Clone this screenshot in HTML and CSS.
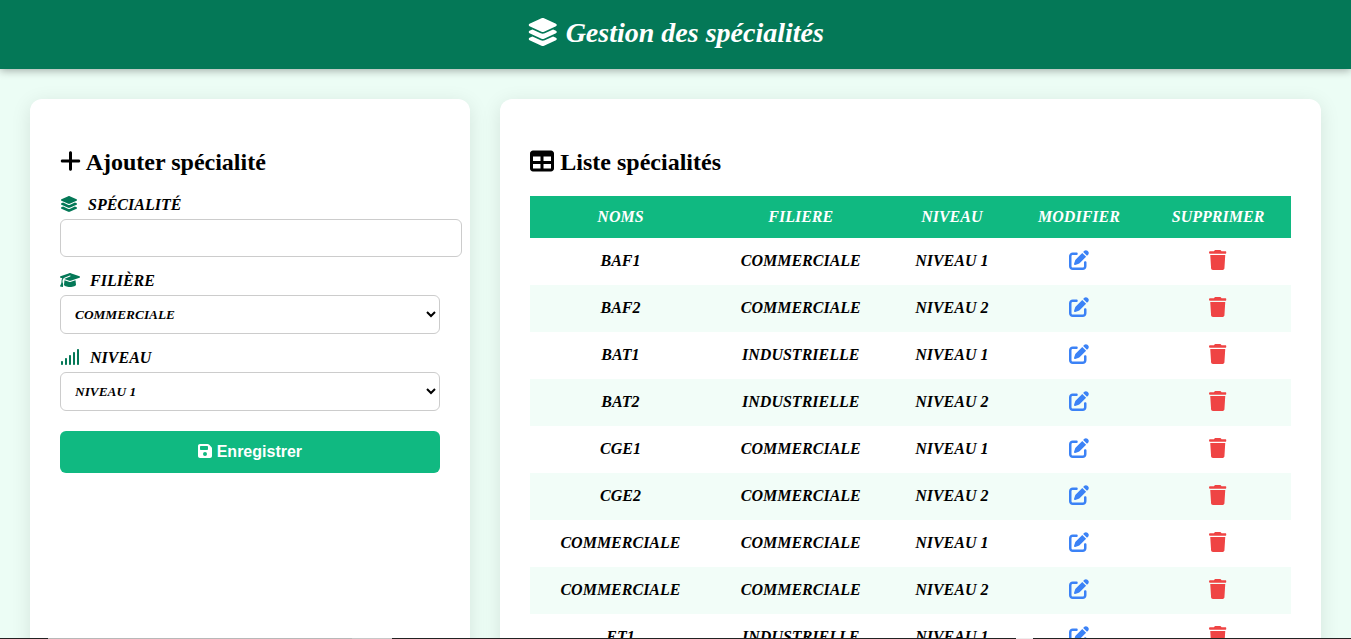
FILE: index.html
```html
<!DOCTYPE html>
<html lang="fr">
<head>
    <meta charset="UTF-8" />
    <meta name="viewport" content="width=device-width, initial-scale=1.0">
    <title>Gestion des spécialités</title>
    <link rel="stylesheet" href="styles.css">
</head>
<body>
<svg class="sprite" aria-hidden="true">
    <symbol id="layers" viewBox="0 0 576 512"><path d="M264.5 5.2c14.9-6.9 32.1-6.9 47 0l218.6 101c8.5 3.9 13.9 12.4 13.9 21.8s-5.4 17.9-13.9 21.8l-218.6 101c-14.9 6.9-32.1 6.9-47 0L45.9 149.8C37.4 145.8 32 137.3 32 128s5.4-17.9 13.9-21.8L264.5 5.2zM476.9 209.6l53.2 24.6c8.5 3.9 13.9 12.4 13.9 21.8s-5.4 17.9-13.9 21.8l-218.6 101c-14.9 6.9-32.1 6.9-47 0L45.9 277.8C37.4 273.8 32 265.3 32 256s5.4-17.9 13.9-21.8l53.2-24.6 152 70.2c23.4 10.8 50.4 10.8 73.8 0l152-70.2zm-152 198.2l152-70.2 53.2 24.6c8.5 3.9 13.9 12.4 13.9 21.8s-5.4 17.9-13.9 21.8l-218.6 101c-14.9 6.9-32.1 6.9-47 0L45.9 405.8C37.4 401.8 32 393.3 32 384s5.4-17.9 13.9-21.8l53.2-24.6 152 70.2c23.4 10.8 50.4 10.8 73.8 0z"/></symbol>
    <symbol id="plus" viewBox="0 0 448 512"><path d="M256 80c0-17.7-14.3-32-32-32s-32 14.3-32 32V224H48c-17.7 0-32 14.3-32 32s14.3 32 32 32H192V432c0 17.7 14.3 32 32 32s32-14.3 32-32V288H400c17.7 0 32-14.3 32-32s-14.3-32-32-32H256V80z"/></symbol>
    <symbol id="table" viewBox="0 0 512 512"><path d="M64 256V160H224v96H64zm0 64H224v96H64V320zm224 96V320H448v96H288zM448 256H288V160H448v96zM64 32C28.7 32 0 60.7 0 96V416c0 35.3 28.7 64 64 64H448c35.3 0 64-28.7 64-64V96c0-35.3-28.7-64-64-64H64z"/></symbol>
    <symbol id="cap" viewBox="0 0 640 512"><path d="M320 32c-8.1 0-16.1 1.4-23.7 4.1L15.8 137.4C6.3 140.9 0 149.9 0 160s6.3 19.1 15.8 22.6l57.9 20.9C57.3 229.3 48 259.8 48 291.9v28.1c0 28.4-10.8 57.7-22.3 80.8c-6.5 13-13.9 25.8-22.5 37.6C0 442.7-.9 448.3 .9 453.4s6 8.9 11.2 10.2l64 16c4.2 1.1 8.7 .3 12.4-2s6.3-6.1 7.1-10.4c8.6-42.8 4.3-81.2-2.1-108.7C90.3 344.3 86 329.8 80 316.5V291.9c0-30.2 10.2-58.7 27.9-81.5c12.9-15.5 29.6-28 49.2-35.7l157-61.7c8.2-3.2 17.5 .8 20.7 9s-.8 17.5-9 20.7l-157 61.7c-12.4 4.9-23.3 12.4-32.2 21.6l159.6 57.6c7.6 2.7 15.6 4.1 23.7 4.1s16.1-1.4 23.7-4.1L624.2 182.6c9.5-3.4 15.8-12.5 15.8-22.6s-6.3-19.1-15.8-22.6L343.7 36.1C336.1 33.4 328.1 32 320 32zM128 408c0 35.3 86 72 192 72s192-36.7 192-72L496.7 262.6 354.5 314c-11.1 4-22.8 6-34.5 6s-23.5-2-34.5-6L143.3 262.6 128 408z"/></symbol>
    <symbol id="signal" viewBox="0 0 640 512"><path d="M576 0c17.7 0 32 14.3 32 32V480c0 17.7-14.3 32-32 32s-32-14.3-32-32V32c0-17.7 14.3-32 32-32zM448 96c17.7 0 32 14.3 32 32V480c0 17.7-14.3 32-32 32s-32-14.3-32-32V128c0-17.7 14.3-32 32-32zM352 224V480c0 17.7-14.3 32-32 32s-32-14.3-32-32V224c0-17.7 14.3-32 32-32s32 14.3 32 32zM192 288c17.7 0 32 14.3 32 32V480c0 17.7-14.3 32-32 32s-32-14.3-32-32V320c0-17.7 14.3-32 32-32zM96 416v64c0 17.7-14.3 32-32 32s-32-14.3-32-32V416c0-17.7 14.3-32 32-32s32 14.3 32 32z"/></symbol>
    <symbol id="save" viewBox="0 0 448 512"><path d="M64 32C28.7 32 0 60.7 0 96V416c0 35.3 28.7 64 64 64H384c35.3 0 64-28.7 64-64V173.3c0-17-6.7-33.3-18.7-45.3L352 50.7C340 38.7 323.7 32 306.7 32H64zm0 96c0-17.7 14.3-32 32-32H288c17.7 0 32 14.3 32 32v64c0 17.7-14.3 32-32 32H96c-17.7 0-32-14.3-32-32V128zM224 288a64 64 0 1 1 0 128 64 64 0 1 1 0-128z"/></symbol>
    <symbol id="edit" viewBox="0 0 512 512"><path d="M471.6 21.7c-21.9-21.9-57.3-21.9-79.2 0L362.3 51.7l97.9 97.9 30.1-30.1c21.9-21.9 21.9-57.3 0-79.2L471.6 21.7zm-299.2 220c-6.1 6.1-10.8 13.6-13.5 21.9l-29.6 88.8c-2.9 8.6-.6 18.1 5.8 24.6s15.9 8.7 24.6 5.8l88.8-29.6c8.2-2.7 15.7-7.4 21.9-13.5L437.7 172.3 339.7 74.3 172.4 241.7zM96 64C43 64 0 107 0 160V416c0 53 43 96 96 96H352c53 0 96-43 96-96V320c0-17.7-14.3-32-32-32s-32 14.3-32 32v96c0 17.7-14.3 32-32 32H96c-17.7 0-32-14.3-32-32V160c0-17.7 14.3-32 32-32h96c17.7 0 32-14.3 32-32s-14.3-32-32-32H96z"/></symbol>
    <symbol id="trash" viewBox="0 0 448 512"><path d="M135.2 17.7L128 32H32C14.3 32 0 46.3 0 64S14.3 96 32 96H416c17.7 0 32-14.3 32-32s-14.3-32-32-32H320l-7.2-14.3C307.4 6.8 296.3 0 284.2 0H163.8c-12.1 0-23.2 6.8-28.6 17.7zM416 128H32L53.2 467c1.6 25.3 22.6 45 47.9 45H346.9c25.3 0 46.3-19.7 47.9-45L416 128z"/></symbol>
</svg>

<header>
    <svg class="icon" viewBox="0 0 576 512"><use href="#layers"/></svg>
    Gestion des spécialités
</header>

<div class="container">
    <!-- Formulaire -->
    <div class="card form-card">
        <h2><svg class="icon" viewBox="0 0 448 512"><use href="#plus"/></svg> Ajouter spécialité</h2>
        <form action="#" method="post">
            <div class="field">
                <label for="specialite"><svg class="icon" viewBox="0 0 576 512"><use href="#layers"/></svg> SPÉCIALITÉ</label>
                <input type="text" id="specialite" name="specialite">
            </div>
            <div class="field">
                <label for="filiere"><svg class="icon" viewBox="0 0 640 512"><use href="#cap"/></svg> FILIÈRE</label>
                <select id="filiere" name="filiere">
                    <option>COMMERCIALE</option>
                    <option>INDUSTRIELLE</option>
                </select>
            </div>
            <div class="field">
                <label for="niveau"><svg class="icon" viewBox="0 0 640 512"><use href="#signal"/></svg> NIVEAU</label>
                <select id="niveau" name="niveau">
                    <option>NIVEAU 1</option>
                    <option>NIVEAU 2</option>
                </select>
            </div>
            <button type="submit"><svg class="icon" viewBox="0 0 448 512"><use href="#save"/></svg> Enregistrer</button>
        </form>
    </div>

    <!-- Liste -->
    <div class="card list-card">
        <h2><svg class="icon" viewBox="0 0 512 512"><use href="#table"/></svg> Liste spécialités</h2>
        <table>
            <thead>
                <tr>
                    <th>NOMS</th>
                    <th>FILIERE</th>
                    <th>NIVEAU</th>
                    <th>MODIFIER</th>
                    <th>SUPPRIMER</th>
                </tr>
            </thead>
            <tbody>
                <tr>
                    <td>BAF1</td>
                    <td>COMMERCIALE</td>
                    <td>NIVEAU 1</td>
                    <td><a class="edit" href="#" aria-label="Modifier"><svg class="icon" viewBox="0 0 512 512"><use href="#edit"/></svg></a></td>
                    <td><a class="delete" href="#" aria-label="Supprimer"><svg class="icon" viewBox="0 0 448 512"><use href="#trash"/></svg></a></td>
                </tr>
                <tr>
                    <td>BAF2</td>
                    <td>COMMERCIALE</td>
                    <td>NIVEAU 2</td>
                    <td><a class="edit" href="#" aria-label="Modifier"><svg class="icon" viewBox="0 0 512 512"><use href="#edit"/></svg></a></td>
                    <td><a class="delete" href="#" aria-label="Supprimer"><svg class="icon" viewBox="0 0 448 512"><use href="#trash"/></svg></a></td>
                </tr>
                <tr>
                    <td>BAT1</td>
                    <td>INDUSTRIELLE</td>
                    <td>NIVEAU 1</td>
                    <td><a class="edit" href="#" aria-label="Modifier"><svg class="icon" viewBox="0 0 512 512"><use href="#edit"/></svg></a></td>
                    <td><a class="delete" href="#" aria-label="Supprimer"><svg class="icon" viewBox="0 0 448 512"><use href="#trash"/></svg></a></td>
                </tr>
                <tr>
                    <td>BAT2</td>
                    <td>INDUSTRIELLE</td>
                    <td>NIVEAU 2</td>
                    <td><a class="edit" href="#" aria-label="Modifier"><svg class="icon" viewBox="0 0 512 512"><use href="#edit"/></svg></a></td>
                    <td><a class="delete" href="#" aria-label="Supprimer"><svg class="icon" viewBox="0 0 448 512"><use href="#trash"/></svg></a></td>
                </tr>
                <tr>
                    <td>CGE1</td>
                    <td>COMMERCIALE</td>
                    <td>NIVEAU 1</td>
                    <td><a class="edit" href="#" aria-label="Modifier"><svg class="icon" viewBox="0 0 512 512"><use href="#edit"/></svg></a></td>
                    <td><a class="delete" href="#" aria-label="Supprimer"><svg class="icon" viewBox="0 0 448 512"><use href="#trash"/></svg></a></td>
                </tr>
                <tr>
                    <td>CGE2</td>
                    <td>COMMERCIALE</td>
                    <td>NIVEAU 2</td>
                    <td><a class="edit" href="#" aria-label="Modifier"><svg class="icon" viewBox="0 0 512 512"><use href="#edit"/></svg></a></td>
                    <td><a class="delete" href="#" aria-label="Supprimer"><svg class="icon" viewBox="0 0 448 512"><use href="#trash"/></svg></a></td>
                </tr>
                <tr>
                    <td>COMMERCIALE</td>
                    <td>COMMERCIALE</td>
                    <td>NIVEAU 1</td>
                    <td><a class="edit" href="#" aria-label="Modifier"><svg class="icon" viewBox="0 0 512 512"><use href="#edit"/></svg></a></td>
                    <td><a class="delete" href="#" aria-label="Supprimer"><svg class="icon" viewBox="0 0 448 512"><use href="#trash"/></svg></a></td>
                </tr>
                <tr>
                    <td>COMMERCIALE</td>
                    <td>COMMERCIALE</td>
                    <td>NIVEAU 2</td>
                    <td><a class="edit" href="#" aria-label="Modifier"><svg class="icon" viewBox="0 0 512 512"><use href="#edit"/></svg></a></td>
                    <td><a class="delete" href="#" aria-label="Supprimer"><svg class="icon" viewBox="0 0 448 512"><use href="#trash"/></svg></a></td>
                </tr>
                <tr>
                    <td>ET1</td>
                    <td>INDUSTRIELLE</td>
                    <td>NIVEAU 1</td>
                    <td><a class="edit" href="#" aria-label="Modifier"><svg class="icon" viewBox="0 0 512 512"><use href="#edit"/></svg></a></td>
                    <td><a class="delete" href="#" aria-label="Supprimer"><svg class="icon" viewBox="0 0 448 512"><use href="#trash"/></svg></a></td>
                </tr>
            </tbody>
        </table>
    </div>
</div>
<div class="bottom-edge"></div>
</body>
</html>
```
FILE: styles.css
```css
body {
    margin: 0;
    background: #ecfdf5;
    color: #000;
    font-family: "Liberation Serif", "Times New Roman", serif;
}

.sprite {
    display: none;
}
.icon {
    height: 1em;
    fill: currentColor;
    vertical-align: -0.125em;
    overflow: visible;
}

header {
    padding: 16px 20px 20px;
    background: #047857;
    color: #fff;
    font-size: 28px;
    line-height: 33px;
    font-weight: bold;
    font-style: italic;
    text-align: center;
    box-shadow: 0 2px 8px rgba(0,0,0,0.3);
}

.container {
    display: flex;
    gap: 30px;
    padding: 30px;
}
.card {
    padding: 30px;
    background: #fff;
    border-radius: 12px;
    box-shadow: 0 4px 20px rgba(0,0,0,0.1);
}
.form-card {
    flex: 1;
}
.list-card {
    flex: 2;
}
h2 {
    margin: 20px 0;
    font-size: 24px;
    line-height: 27px;
}

/* formulaire */
.field {
    margin-bottom: 15px;
}
label {
    display: block;
    margin-bottom: 5px;
    line-height: 18px;
    font-weight: bold;
    font-style: italic;
}
label .icon {
    margin-right: 6px;
    color: #047857;
}
input, select {
    display: block;
    width: 100%;
    padding: 10px;
    border: 1px solid #ccc;
    border-radius: 6px;
    background: #fff;
    color: #000;
    font-family: inherit;
    font-weight: bold;
    font-style: italic;
}
input {
    height: 16px;
}
select {
    height: 39px;
}
button {
    display: block;
    width: 100%;
    margin-top: 20px;
    padding: 12px;
    border: none;
    border-radius: 6px;
    background: #10b981;
    color: #fff;
    font-family: "Liberation Sans", Arial, sans-serif;
    font-size: 16px;
    line-height: 18px;
    font-weight: bold;
    cursor: pointer;
}

/* tableau */
table {
    width: 100%;
    border-collapse: collapse;
    font-weight: bold;
    font-style: italic;
}
th, td {
    padding: 12px;
    text-align: center;
}
th {
    background: #10b981;
    color: #fff;
}
td {
    padding: 11px 12px 13px;
}
tbody tr:nth-child(even) {
    background: #f2fdf8;
}
td a {
    display: block;
    font-size: 20px;
    line-height: 23px;
}
.edit {
    color: #3b82f6;
}
.delete {
    color: #ef4444;
}

.bottom-edge {
    position: fixed;
    left: 0;
    right: 0;
    bottom: 0;
    height: 1px;
    background: linear-gradient(to right, #222 48px, #b8b8b8 48px, #b8b8b8 352px, #c8c8c8 352px, #c8c8c8 392px, #222 392px, #222 1016px, #eee 1016px, #eee 1033px, #222 1033px);
}
```
